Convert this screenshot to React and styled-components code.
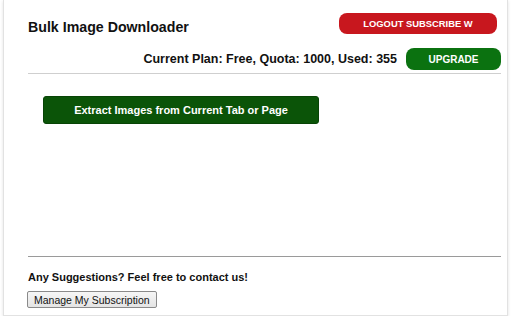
import React from "react";
import styled, { createGlobalStyle } from "styled-components";

const GlobalStyle = createGlobalStyle`
  body {
    margin: 0;
    background: #ffffff;
    font-family: "Liberation Sans", Arial, sans-serif;
  }
`;

const Card = styled.div`
  box-sizing: border-box;
  margin: 0 4px 0 3px;
  height: 316px;
  border: 1px solid #e2e2e2;
  border-top: none;
  box-shadow: 0 1px 3px rgba(0, 0, 0, 0.12);
  padding: 0 6px 0 24px;
  display: flex;
  flex-direction: column;
  color: #111;
`;

const TopRow = styled.div`
  display: flex;
  justify-content: space-between;
  align-items: flex-start;
  padding-top: 13px;
  padding-right: 4px;
`;

const Title = styled.h1`
  margin: 0;
  font-size: 14.2px;
  line-height: 16px;
  font-weight: 700;
  padding-top: 6px;
`;

const PillButton = styled.button`
  border: none;
  border-radius: 8px;
  color: #fff;
  font-family: inherit;
  font-weight: 700;
  text-transform: uppercase;
  font-size: ${(p) => p.$size || "9px"};
  background: ${(p) => p.$bg};
  width: ${(p) => p.$w};
  height: ${(p) => p.$h};
  padding: 0;
  cursor: pointer;
`;

const PlanRow = styled.div`
  display: flex;
  justify-content: flex-end;
  align-items: center;
  gap: 9px;
  margin-top: 13px;
`;

const PlanText = styled.span`
  font-size: 12.5px;
  font-weight: 700;
`;

const Divider = styled.hr`
  margin: 0;
  border: none;
  border-top: 1px solid ${(p) => p.$color};
`;

const Main = styled.div`
  padding: 22px 0 0 15px;
`;

const ExtractButton = styled.button`
  width: 276px;
  height: 28px;
  border: 1px solid #084406;
  border-radius: 3px;
  background: #0b5408;
  color: #fff;
  font-family: inherit;
  font-size: 11px;
  font-weight: 700;
  cursor: pointer;
`;

const Footer = styled.div`
  margin-top: auto;
  padding-bottom: 7px;
`;

const Note = styled.p`
  margin: 14px 0 6px;
  font-size: 11px;
  line-height: 13px;
  font-weight: 700;
`;

const PlainButton = styled.button`
  font-family: inherit;
  font-size: 10.5px;
  height: 17px;
  padding: 0 6px;
  margin-left: -1px;
  border: 1px solid #8a8a8a;
  border-radius: 2px;
  background: linear-gradient(#f6f6f6, #e4e4e4);
  color: #111;
`;

export default function App() {
  return (
    <>
      <GlobalStyle />
      <Card>
        <TopRow>
          <Title>Bulk Image Downloader</Title>
          <PillButton $bg="#c8171e" $w="158px" $h="21px" $size="9.4px">
            Logout Subscribe W
          </PillButton>
        </TopRow>
        <PlanRow>
          <PlanText>Current Plan: Free, Quota: 1000, Used: 355</PlanText>
          <PillButton $bg="#0b7210" $w="95px" $h="22px" $size="10px">
            Upgrade
          </PillButton>
        </PlanRow>
        <Divider $color="#cfcfcf" style={{ marginTop: 3 }} />
        <Main>
          <ExtractButton>Extract Images from Current Tab or Page</ExtractButton>
        </Main>
        <Footer>
          <Divider $color="#9a9a9a" />
          <Note>Any Suggestions? Feel free to contact us!</Note>
          <PlainButton>Manage My Subscription</PlainButton>
        </Footer>
      </Card>
    </>
  );
}
